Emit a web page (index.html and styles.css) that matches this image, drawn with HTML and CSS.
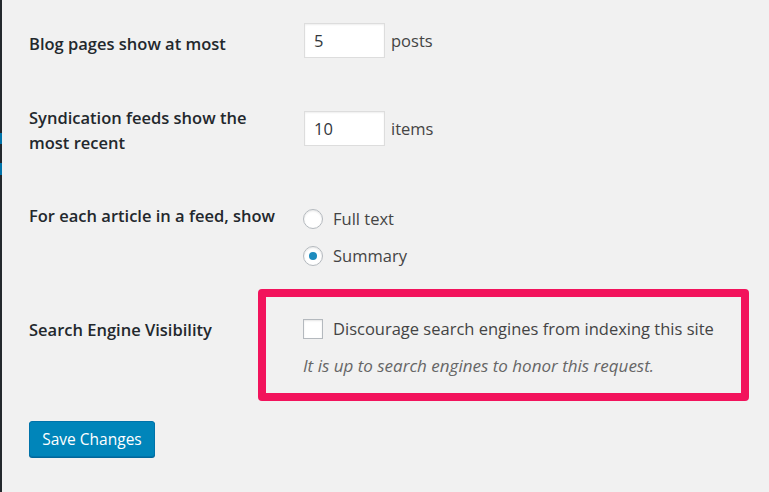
FILE: index.html
```html
<!DOCTYPE html>
<html lang="en">
<head>
<meta charset="utf-8">
<title>Reading Settings</title>
<link rel="stylesheet" href="styles.css">
</head>
<body>
<div class="page">
  <aside class="adminbar-edge">
    <div class="edge-mark first"></div>
    <div class="edge-mark second"></div>
  </aside>
  <main class="content">
    <div class="row row-posts">
      <div class="label">Blog pages show at most</div>
      <div class="field">
        <span class="num-input">5</span>
        <span class="unit">posts</span>
      </div>
    </div>
    <div class="row row-feeds">
      <div class="label">Syndication feeds show the<br>most recent</div>
      <div class="field">
        <span class="num-input">10</span>
        <span class="unit">items</span>
      </div>
    </div>
    <div class="row row-article">
      <div class="label">For each article in a feed, show</div>
      <div class="field radios">
        <label class="radio-line"><span class="radio"></span><span>Full text</span></label>
        <label class="radio-line"><span class="radio checked"></span><span>Summary</span></label>
      </div>
    </div>
    <div class="row row-visibility">
      <div class="label">Search Engine Visibility</div>
      <div class="highlight">
        <label class="check-line"><span class="checkbox"></span><span>Discourage search engines from indexing this site</span></label>
        <p class="description">It is up to search engines to honor this request.</p>
      </div>
    </div>
    <div class="submit">
      <button class="button-primary" type="button">Save Changes</button>
    </div>
  </main>
</div>
</body>
</html>
```
FILE: styles.css
```css
html, body {
  margin: 0;
  padding: 0;
  background: #f1f1f1;
}
body {
  font-family: "Open Sans", "Noto Sans", "Liberation Sans", sans-serif;
  color: #444;
  font-size: 16px;
}
.page {
  display: flex;
  min-height: 492px;
}
.adminbar-edge {
  width: 2px;
  flex: none;
  background: #23282d;
  display: flex;
  flex-direction: column;
}
.edge-mark {
  background: #0073aa;
}
.edge-mark.first {
  margin-top: 133px;
  height: 11px;
}
.edge-mark.second {
  margin-top: 19px;
  height: 12px;
}
.content {
  flex: 1;
  padding-left: 27px;
}
.row {
  display: grid;
  grid-template-columns: 275px 1fr;
  align-items: start;
}
.label {
  color: #23282d;
  font-weight: 600;
  font-size: 16.5px;
  line-height: 25px;
}
.field {
  font-size: 16.5px;
  line-height: 25px;
}
.row-posts .label { padding-top: 31px; }
.row-posts .field { padding-top: 23px; }
.row-feeds .label { padding-top: 47px; }
.row-feeds .field { padding-top: 53px; }
.field:not(.radios) {
  display: flex;
  align-items: center;
  gap: 6px;
}
.num-input {
  box-sizing: border-box;
  width: 81px;
  height: 35px;
  background: #fff;
  border: 1px solid #ddd;
  box-shadow: inset 0 1px 2px rgba(0,0,0,.07);
  color: #32373c;
  padding: 0 9px;
  line-height: 33px;
}
.unit { color: #444; }
.row-article .label { padding-top: 48px; }
.row-article .field { padding-top: 51px; margin-left: -1px; }
.radios {
  display: flex;
  flex-direction: column;
  gap: 12px;
}
.radio-line, .check-line {
  display: flex;
  align-items: center;
  gap: 10px;
  line-height: 25px;
  color: #444;
}
.radio {
  box-sizing: border-box;
  width: 20px;
  height: 20px;
  border-radius: 50%;
  border: 1px solid #b4b9be;
  background: #fff;
  box-shadow: inset 0 1px 2px rgba(0,0,0,.1);
  display: flex;
  align-items: center;
  justify-content: center;
}
.radio.checked::before {
  content: "";
  width: 8px;
  height: 8px;
  border-radius: 50%;
  background: #1e8cbe;
}
.row-visibility .label { padding-top: 49px; }
.highlight {
  margin-top: 21px;
  margin-left: -46px;
  width: 491px;
  box-sizing: border-box;
  border: 8px solid #f2135c;
  border-radius: 4px;
  padding: 19px 10px 15px 37px;
}
.check-line { font-size: 16.5px; }
.checkbox {
  box-sizing: border-box;
  width: 20px;
  height: 20px;
  border: 1px solid #b4b9be;
  background: #fff;
  box-shadow: inset 0 1px 2px rgba(0,0,0,.1);
  flex: none;
}
.description {
  margin: 12px 0 0;
  font-style: italic;
  color: #666;
  font-size: 17px;
  line-height: 25px;
}
.submit {
  padding-top: 20px;
}
.button-primary {
  box-sizing: border-box;
  width: 126px;
  height: 36px;
  background: #0085ba;
  border: 1px solid #0073aa;
  border-radius: 3px;
  box-shadow: 0 1px 0 #006799;
  color: #fff;
  font-family: inherit;
  font-size: 15.5px;
  padding: 0;
  cursor: pointer;
}
```
